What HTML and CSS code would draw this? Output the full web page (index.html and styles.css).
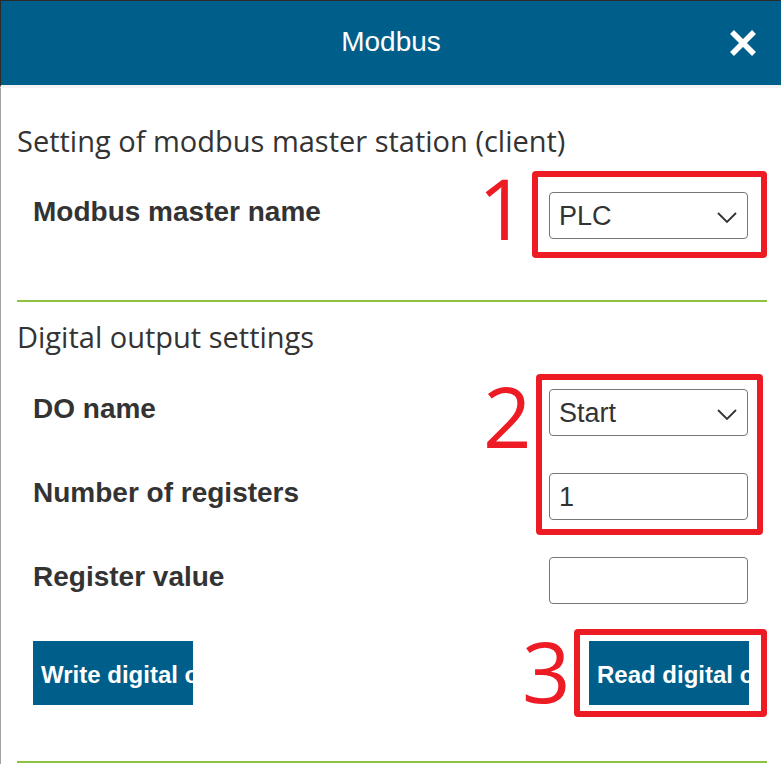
FILE: index.html
```html
<!DOCTYPE html>
<html lang="en">
<head>
<meta charset="utf-8">
<title>Modbus</title>
<link rel="stylesheet" href="styles.css">
</head>
<body>
<div class="dialog">
  <header class="hdr">
    <span></span>
    <h1 class="hdr-title">Modbus</h1>
    <button class="close" aria-label="Close">
      <svg width="28" height="28" viewBox="0 0 28 28"><path d="M3 3 L25 25 M25 3 L3 25" stroke="#fff" stroke-width="5.5" fill="none"/></svg>
    </button>
  </header>
  <main class="content">
    <section class="sec sec-master">
      <h2 class="sec-title">Setting of modbus master station (client)</h2>
      <div class="row">
        <label class="lbl">Modbus master name</label>
        <div class="field select"><span>PLC</span>
          <svg class="chev" width="20" height="11" viewBox="0 0 20 11"><path d="M1 1 L10 10 L19 1" stroke="#333" stroke-width="1.8" fill="none"/></svg>
        </div>
      </div>
    </section>
    <section class="sec sec-do">
      <h2 class="sec-title">Digital output settings</h2>
      <div class="row">
        <label class="lbl">DO name</label>
        <div class="field select"><span>Start</span>
          <svg class="chev" width="20" height="11" viewBox="0 0 20 11"><path d="M1 1 L10 10 L19 1" stroke="#333" stroke-width="1.8" fill="none"/></svg>
        </div>
      </div>
      <div class="row">
        <label class="lbl">Number of registers</label>
        <div class="field input"><span>1</span></div>
      </div>
      <div class="row">
        <label class="lbl">Register value</label>
        <div class="field input"><span></span></div>
      </div>
      <div class="btn-row">
        <button class="btn">Write digital output</button>
        <button class="btn">Read digital output</button>
      </div>
    </section>
  </main>
  <div class="marks">
    <div class="mark-box box1"></div>
    <div class="mark-box box2"></div>
    <div class="mark-box box3"></div>
    <span class="mark-num num1">1</span>
    <span class="mark-num num2">2</span>
    <span class="mark-num num3">3</span>
  </div>
</div>
</body>
</html>
```
FILE: styles.css
```css
* { box-sizing: border-box; }
html, body { margin: 0; padding: 0; background: #fff; }
body { width: 781px; height: 764px; overflow: hidden; }

.dialog {
  position: relative;
  width: 781px;
  height: 764px;
  border-left: 1px solid #a3a3a3;
  background: #fff;
}

.hdr {
  margin-left: -1px;
  height: 88px;
  border-top: 1px solid #2b2b2b;
  border-left: 1px solid #2b2b2b;
  border-bottom: 3px solid #f3f3f3;
  background: #005e8a;
  display: grid;
  grid-template-columns: 1fr auto 1fr;
  align-items: center;
}
.hdr-title {
  margin: 0;
  font-family: "Liberation Sans", Arial, sans-serif;
  font-weight: 400;
  font-size: 28px;
  color: #fff;
  line-height: 32px;
  padding-bottom: 3px;
}
.close {
  justify-self: end;
  margin-right: 24px;
  padding: 0;
  border: 0;
  background: none;
  width: 28px;
  height: 28px;
  display: flex;
}

.content {
  padding: 0 14px 0 16px;
}
.sec {
  border-bottom: 2px solid #8cc23f;
}
.sec-master { padding: 35px 0 61px; }
.sec-do { padding: 17px 0 56px; }

.sec-title {
  margin: 0;
  font-family: "Open Sans", "Noto Sans", sans-serif;
  font-weight: 400;
  font-size: 29px;
  line-height: 36px;
  color: #333;
  white-space: nowrap;
}
.sec-master .sec-title { margin-bottom: 33px; }
.sec-do .sec-title { margin-bottom: 34px; }

.row {
  display: flex;
  justify-content: space-between;
  align-items: flex-start;
  height: 47px;
  margin-bottom: 37px;
  padding: 0 19px 0 16px;
}
.sec-master .row { margin-bottom: 0; }

.lbl {
  font-family: "Liberation Sans", Arial, sans-serif;
  font-weight: 700;
  font-size: 28px;
  line-height: 30px;
  padding-top: 5px;
  color: #333;
}

.field {
  width: 199px;
  height: 47px;
  border: 1px solid #767676;
  border-radius: 4px;
  display: flex;
  align-items: center;
  justify-content: space-between;
  padding: 0 10px 0 9px;
  font-family: "Liberation Sans", Arial, sans-serif;
  font-size: 27px;
  line-height: 30px;
  color: #333;
}
.chev { margin-top: 3px; }

.btn-row {
  display: flex;
  justify-content: space-between;
  padding: 0 18px 0 16px;
}
.btn {
  width: 160px;
  height: 64px;
  border: 0;
  margin: 0;
  padding: 4px 0 0 8px;
  background: #005e8a;
  color: #fff;
  font-family: "Liberation Sans", Arial, sans-serif;
  font-weight: 700;
  font-size: 24px;
  text-align: left;
  white-space: nowrap;
  overflow: hidden;
}

.marks { position: absolute; left: 0; top: 0; width: 0; height: 0; }
.mark-box {
  position: absolute;
  border: 6px solid #ed1c24;
  border-radius: 4px;
}
.box1 { left: 531px; top: 171px; width: 235px; height: 87px; }
.box2 { left: 535px; top: 374px; width: 227px; height: 161px; }
.box3 { left: 573px; top: 629px; width: 193px; height: 88px; }

.mark-num {
  position: absolute;
  font-family: "Open Sans", "Noto Sans", sans-serif;
  font-size: 85px;
  line-height: 85px;
  color: #ed1c24;
}
.num1 { left: 477px; top: 165px; }
.num2 { left: 482px; top: 373px; }
.num3 { left: 521px; top: 628px; }
```
